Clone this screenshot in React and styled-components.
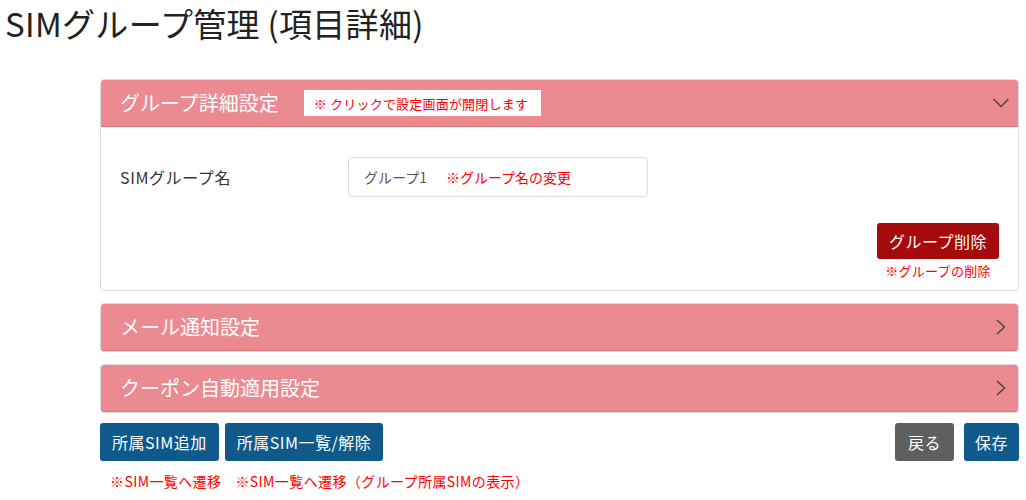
import React from "react";
import styled, { createGlobalStyle } from "styled-components";

const Global = createGlobalStyle`
  html, body { margin: 0; padding: 0; background: #fff; }
  body { font-family: "Noto Sans CJK JP", "Noto Sans", sans-serif; color: #333; }
  * { box-sizing: border-box; }
`;

const Page = styled.div`
  width: 1026px;
  padding: 0 7px 0 5px;
`;

const Title = styled.h1`
  margin: 0;
  padding-top: 1px;
  height: 79px;
  font-size: 33px;
  font-weight: 400;
  line-height: 44px;
  letter-spacing: 0.3px;
  color: #222;
`;

const Content = styled.div`
  margin-left: 95px;
  display: flex;
  flex-direction: column;
  gap: 12px;
`;

const FooterArea = styled.div`
  margin-left: 95px;
  display: flex;
  flex-direction: column;
`;

const Panel = styled.section`
  border: 1px solid #dcdcdc;
  border-radius: 4px;
  background: #fff;
  overflow: hidden;
`;

const PanelHeader = styled.div`
  height: 47px;
  background: #eb8a90;
  border-bottom: 1px solid #d4767c;
  display: flex;
  align-items: center;
  padding: 0 9px 0 19px;
  gap: 25px;
`;

const PanelTitle = styled.div`
  color: #fff;
  font-size: 20px;
  line-height: 24px;
`;

const Notice = styled.div`
  background: #fff;
  color: #f00;
  font-size: 13px;
  height: 26px;
  width: 237px;
  display: flex;
  align-items: center;
  padding-left: 10px;
  letter-spacing: 0.2px;
`;

const Chevron = styled.svg`
  margin-left: auto;
  width: 16px;
  height: 16px;
  stroke: #444;
  fill: none;
  stroke-width: 1.4;
`;

const PanelBody = styled.div`
  padding: 30px 19px 10px 19px;
  display: flex;
  flex-direction: column;
`;

const FieldRow = styled.div`
  display: flex;
  align-items: center;
`;

const Label = styled.div`
  width: 228px;
  font-size: 16px;
  letter-spacing: 0.6px;
  color: #333;
`;

const InputBox = styled.div`
  width: 300px;
  height: 40px;
  border: 1px solid #dcdcdc;
  border-radius: 4px;
  display: flex;
  align-items: center;
  padding-left: 15px;
  gap: 19px;
  font-size: 14px;
`;

const Value = styled.span`
  color: #555;
`;

const Red = styled.span`
  color: #f00;
  font-size: ${(p) => p.$size || 14}px;
  letter-spacing: ${(p) => p.$ls || 0}px;
`;

const DeleteArea = styled.div`
  margin-top: 26px;
  align-self: flex-end;
  display: flex;
  flex-direction: column;
  align-items: center;
  gap: 2px;
`;

const Button = styled.button`
  border: none;
  border-radius: 3px;
  color: #fff;
  font-family: inherit;
  font-size: 16px;
  letter-spacing: ${(p) => p.$ls ?? 0.5}px;
  height: ${(p) => p.$h || 38}px;
  padding: 0 ${(p) => p.$px || 12}px;
  background: ${(p) =>
    p.$variant === "danger" ? "#a50a0c" : p.$variant === "gray" ? "#5f5f5f" : "#0f5a8a"};
  cursor: pointer;
`;

const Footer = styled.div`
  margin-top: 10px;
  display: flex;
  align-items: center;
  gap: 6px;
`;

const RightGroup = styled.div`
  margin-left: auto;
  display: flex;
  gap: 10px;
`;

const Notes = styled.div`
  margin-top: 10px;
  padding-left: 10px;
  display: flex;
  gap: 14px;
  line-height: 20px;
`;

function ChevronDown() {
  return (
    <Chevron viewBox="0 0 16 16">
      <path d="M0.5 4 L8 11.5 L15.5 4" />
    </Chevron>
  );
}

function ChevronRight() {
  return (
    <Chevron viewBox="0 0 16 16">
      <path d="M4 1 L11.5 8 L4 15" />
    </Chevron>
  );
}

export default function App() {
  return (
    <>
      <Global />
      <Page>
        <Title>SIMグループ管理 (項目詳細)</Title>
        <Content>
          <Panel>
            <PanelHeader>
              <PanelTitle>グループ詳細設定</PanelTitle>
              <Notice>※ クリックで設定画面が開閉します</Notice>
              <ChevronDown />
            </PanelHeader>
            <PanelBody>
              <FieldRow>
                <Label>SIMグループ名</Label>
                <InputBox>
                  <Value>グループ1</Value>
                  <Red>※グループ名の変更</Red>
                </InputBox>
              </FieldRow>
              <DeleteArea>
                <Button $variant="danger" $h={36} $px={12}>グループ削除</Button>
                <Red $size={13} $ls={0.3}>※グループの削除</Red>
              </DeleteArea>
            </PanelBody>
          </Panel>
          <Panel>
            <PanelHeader>
              <PanelTitle>メール通知設定</PanelTitle>
              <ChevronRight />
            </PanelHeader>
          </Panel>
          <Panel>
            <PanelHeader>
              <PanelTitle>クーポン自動適用設定</PanelTitle>
              <ChevronRight />
            </PanelHeader>
          </Panel>
        </Content>
        <FooterArea>
          <Footer>
            <Button>所属SIM追加</Button>
            <Button>所属SIM一覧/解除</Button>
            <RightGroup>
              <Button $variant="gray" $px={13}>戻る</Button>
              <Button $px={11}>保存</Button>
            </RightGroup>
          </Footer>
          <Notes>
            <Red $ls={0.4}>※SIM一覧へ遷移</Red>
            <Red $ls={0.4}>※SIM一覧へ遷移（グループ所属SIMの表示）</Red>
          </Notes>
        </FooterArea>
      </Page>
    </>
  );
}
